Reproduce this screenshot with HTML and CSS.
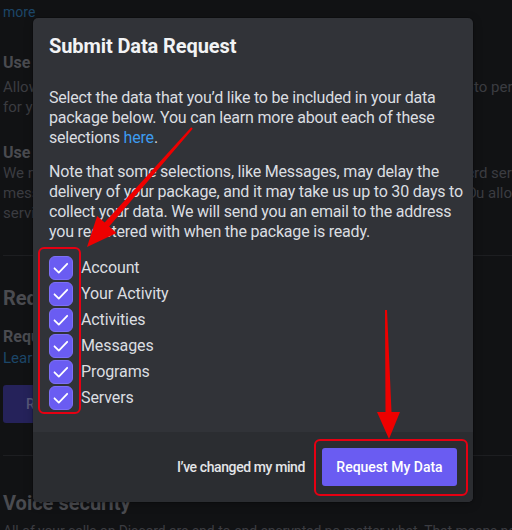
FILE: index.html
```html
<!DOCTYPE html>
<html lang="en">
<head>
<meta charset="utf-8">
<title>Submit Data Request</title>
<link rel="stylesheet" href="styles.css">
</head>
<body>
<div class="screen">
  <div class="bg">
    <div class="line">make Discord more useful and relevant to you, and we may use it to show you things. Learn</div>
    <div class="line"><span class="bglink">more</span></div>
    <div class="bgh3 s1">Use data to personalize my Discord experience</div>
    <div class="desc d1">
      <div class="row"><span class="lead">Allow us to use information, such as who you talk to and what games you play,</span><span class="tail">to personalize Discord</span></div>
      <div class="row"><span class="lead">for you.</span></div>
    </div>
    <div class="bgh3 s2">Use data to make Discord work</div>
    <div class="desc">
      <div class="row"><span class="lead">We need to store and process some data in order to provide you the basic Discord</span><span class="tail">rd service</span></div>
      <div class="row"><span class="lead">messages, what servers you're in and your Direct Messages. By using Discord, yo</span><span class="tail tail2">u allow us</span></div>
      <div class="row"><span class="lead">service. You can stop this by Disabling or Deleting your account.</span></div>
    </div>
    <div class="divider d-a"></div>
    <div class="bgh2 s3">Request all of my Data</div>
    <div class="bgh3 s4">Request a copy of all of my Discord data</div>
    <div class="line"><span class="bglink">Learn more about how to get a copy of your personal data.</span></div>
    <div class="bgbtn">Request Data</div>
    <div class="divider d-b"></div>
    <div class="bgh2 s5">Voice security</div>
    <div class="line last">All of your calls on Discord are end-to-end encrypted no matter what. That means nobody else can listen.</div>
  </div>

  <div class="modal">
    <div class="modal-header">
      <h1 class="modal-title">Submit Data Request</h1>
    </div>
    <div class="modal-content">
      <p class="para p1">Select the data that you’d like to be included in your data package below. You can learn more about each of these selections <a class="link">here</a>.</p>
      <p class="para p2">Note that some selections, like Messages, may delay the delivery of your package, and it may take us up to 30 days to collect your data. We will send you an email to the address you registered with when the package is ready.</p>
      <ul class="checklist">
        <li class="check-row"><span class="box"><svg viewBox="0 0 24 24"><path d="M5.5 12.3 L9.8 16.6 L18.2 7.8"/></svg></span><span class="label">Account</span></li>
        <li class="check-row"><span class="box"><svg viewBox="0 0 24 24"><path d="M5.5 12.3 L9.8 16.6 L18.2 7.8"/></svg></span><span class="label">Your Activity</span></li>
        <li class="check-row"><span class="box"><svg viewBox="0 0 24 24"><path d="M5.5 12.3 L9.8 16.6 L18.2 7.8"/></svg></span><span class="label">Activities</span></li>
        <li class="check-row"><span class="box"><svg viewBox="0 0 24 24"><path d="M5.5 12.3 L9.8 16.6 L18.2 7.8"/></svg></span><span class="label">Messages</span></li>
        <li class="check-row"><span class="box"><svg viewBox="0 0 24 24"><path d="M5.5 12.3 L9.8 16.6 L18.2 7.8"/></svg></span><span class="label">Programs</span></li>
        <li class="check-row"><span class="box"><svg viewBox="0 0 24 24"><path d="M5.5 12.3 L9.8 16.6 L18.2 7.8"/></svg></span><span class="label">Servers</span></li>
      </ul>
    </div>
    <div class="modal-footer">
      <button class="btn-link">I’ve changed my mind</button>
      <button class="btn-primary">Request My Data</button>
    </div>
  </div>

  <div class="mark mark-checks"></div>
  <div class="mark mark-button"></div>
  <svg class="arrows" viewBox="0 0 512 530" width="512" height="530">
    <polygon points="191.25,127.34 192.75,128.66 109.15,226.49 116.65,233.1 87,247 97.15,215.9 104.65,222.51"/>
    <polygon points="385,310 387,310 391.5,412 400,412 389,439 377,412 385.5,412"/>
  </svg>
</div>
</body>
</html>
```

FILE: styles.css
```css
* { box-sizing: border-box; }
html, body { margin: 0; padding: 0; background: #111214; }
body { font-family: Roboto, "Noto Sans", "Liberation Sans", sans-serif; }

.screen {
  position: relative;
  width: 512px;
  height: 530px;
  overflow: hidden;
  background: #111214;
}

/* ---------- dimmed background page ---------- */
.bg {
  margin-top: -18px;
  padding-left: 3px;
  width: 512px;
  font-size: 14px;
  line-height: 20px;
  color: #3b3c41;
}
.line { white-space: nowrap; height: 20px; overflow: hidden; }
.bglink { color: #1c4668; }
.bgh3 {
  font-size: 16px;
  font-weight: 700;
  line-height: 20px;
  color: #4a4b50;
  white-space: nowrap;
}
.bgh2 {
  font-size: 20px;
  font-weight: 700;
  line-height: 24px;
  color: #4a4b50;
  white-space: nowrap;
}
.s1 { margin-top: 31px; }
.d1 { margin-top: 4px; }
.s2 { margin-top: 26px; }
.desc { display: flex; flex-direction: column; font-size: 15px; }
.row { display: flex; width: 509px; white-space: nowrap; height: 20px; }
.lead { overflow: hidden; flex: 0 1 auto; min-width: 0; }
.tail { flex: none; margin-left: auto; width: 38px; overflow: hidden; }
.tail2 { width: 36px; }
.divider { height: 1px; background: #1d1e21; width: 509px; }
.d-a { margin-top: 32px; }
.s3 { margin-top: 30px; }
.s4 { margin-top: 17px; }
.s4 + .line { margin-top: 1px; font-size: 15px; }
.bgbtn {
  margin-top: 17px;
  width: 130px;
  height: 38px;
  border-radius: 3px;
  background: #25225a;
  color: #58587a;
  font-size: 14px;
  font-weight: 500;
  display: flex;
  align-items: center;
  justify-content: center;
}
.d-b { margin-top: 32px; }
.s5 { margin-top: 35px; }
.last { margin-top: 6px; font-size: 14px; letter-spacing: -0.1px; }

/* ---------- modal ---------- */
.modal {
  position: absolute;
  left: 33px;
  top: 18px;
  width: 440px;
  height: 484px;
  background: #313338;
  border-radius: 5px;
  overflow: hidden;
  display: flex;
  flex-direction: column;
  box-shadow: 0 0 0 1px rgba(0,0,0,0.15), 0 2px 10px rgba(0,0,0,0.25);
}
.modal-header { padding: 16px 16px 0; }
.modal-title {
  margin: 0;
  font-size: 20px;
  line-height: 24px;
  font-weight: 700;
  color: #f2f3f5;
  letter-spacing: -0.1px;
}
.modal-content {
  flex: 1;
  padding: 0 4px 0 16px;
}
.para {
  margin: 0;
  font-size: 16px;
  line-height: 20px;
  color: #dbdee1;
  letter-spacing: -0.2px;
}
.p1 { margin-top: 30px; }
.p2 { margin-top: 14px; }
.link { color: #3d9cf0; cursor: pointer; }

.checklist {
  list-style: none;
  margin: 14px 0 0;
  padding: 0;
  display: flex;
  flex-direction: column;
  gap: 2px;
}
.check-row {
  display: flex;
  align-items: center;
  gap: 8px;
  height: 24px;
}
.box {
  width: 24px;
  height: 24px;
  border-radius: 6px;
  background: #6a5cf2;
  border: 1px solid #7d70f6;
  display: flex;
  align-items: center;
  justify-content: center;
}
.box svg { width: 24px; height: 24px; flex: none; margin: -1px; }
.box path {
  fill: none;
  stroke: #ffffff;
  stroke-width: 1.8;
  stroke-linecap: round;
  stroke-linejoin: round;
}
.label {
  font-size: 16px;
  line-height: 20px;
  color: #dbdee1;
  letter-spacing: -0.1px;
}

.modal-footer {
  height: 70px;
  background: #2b2d31;
  padding: 16px;
  display: flex;
  justify-content: flex-end;
  align-items: center;
}
.btn-link {
  background: none;
  border: none;
  padding: 0;
  margin-right: 17px;
  font-family: inherit;
  font-size: 14px;
  font-weight: 500;
  letter-spacing: -0.4px;
  color: #e3e5e8;
}
.btn-primary {
  width: 135px;
  height: 38px;
  border: none;
  border-radius: 3px;
  background: #6a5cf2;
  color: #ffffff;
  font-family: inherit;
  font-size: 14px;
  font-weight: 500;
}

/* ---------- annotations ---------- */
.mark {
  position: absolute;
  border: 2px solid #e60012;
  border-radius: 6px;
}
.mark-checks { left: 38px; top: 247px; width: 43px; height: 167px; }
.mark-button { left: 314px; top: 439px; width: 154px; height: 57px; }
.arrows {
  position: absolute;
  left: 0;
  top: 0;
  pointer-events: none;
}
.arrows polygon { fill: #ee0000; }
```
